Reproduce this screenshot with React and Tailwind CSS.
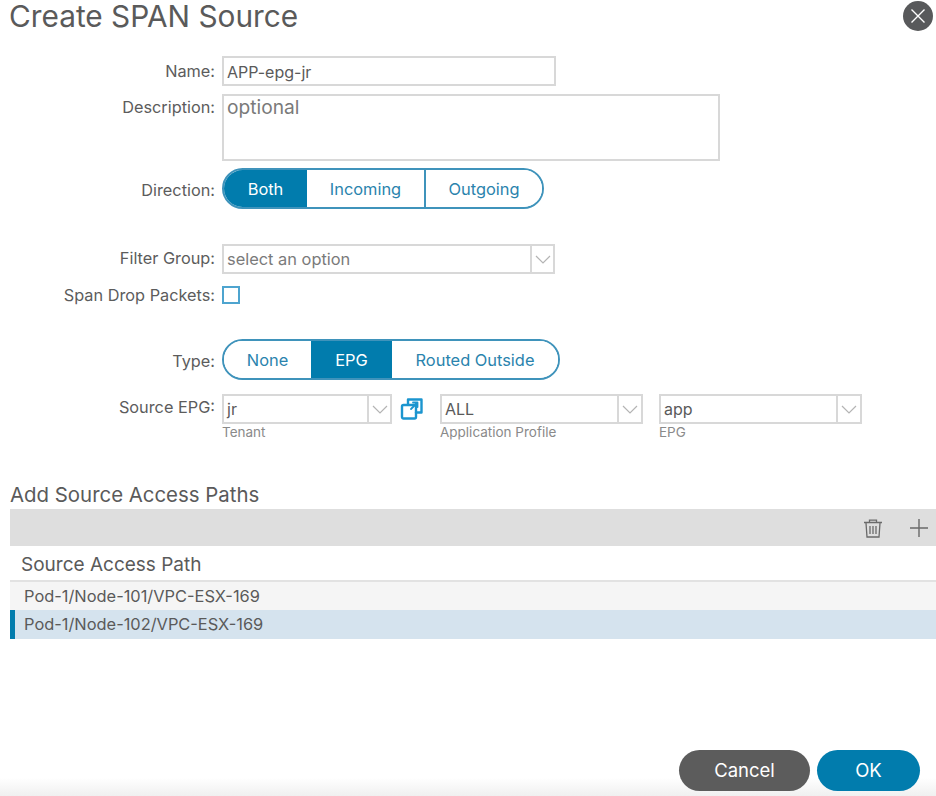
import React from "react";

const font = "[font-family:Inter,'Liberation_Sans',sans-serif]";

function Label({ children }) {
  return <div className="w-[215px] shrink-0 text-right text-[16.3px] leading-[20px] text-[#5c5c5c]">{children}</div>;
}

function Select({ value, placeholder, className, divider }) {
  return (
    <div className={`h-[30px] flex border-2 border-[#d8d8d8] bg-white ${className}`}>
      <div className={`flex-1 pl-[3px] leading-[27px] ${placeholder ? "text-[16.4px] text-[#7a7a7a]" : "text-[16px] text-[#5a5a5a]"}`}>{value}</div>
      <div className={`${divider} shrink-0 border-l-2 border-[#d8d8d8] flex items-center justify-center`}>
        <svg width="16" height="9" viewBox="0 0 16 9" fill="none" stroke="#b4b4b4" strokeWidth="1.2">
          <path d="M1 1l7 7 7-7" />
        </svg>
      </div>
    </div>
  );
}

function Segment({ items, widths }) {
  return (
    <div className="flex h-[41px] rounded-full border-2 border-[#3f93bb] overflow-hidden w-fit text-[16.4px]">
      {items.map((it, i) => (
        <div
          key={it.label}
          className={`${widths[i]} pt-[2px] flex items-center justify-center ${it.active ? "bg-[#017cad] text-white" : "bg-white text-[#2a83ad]"} ${it.divider ? "border-l-2 border-[#3f93bb]" : ""}`}
        >
          {it.label}
        </div>
      ))}
    </div>
  );
}

export default function App() {
  return (
    <div className={`${font} relative w-[936px] h-[796px] overflow-hidden bg-white flex flex-col`}>
      <div className="flex justify-between items-start pl-[9px] pr-[3px]">
        <h1 className="text-[29.8px] leading-[32px] text-[#5a5a5a] font-normal">Create SPAN Source</h1>
        <button className="mt-[1px] w-[30px] h-[30px] rounded-full bg-[#58595b] flex items-center justify-center">
          <svg width="16" height="16" viewBox="0 0 16 16" fill="none" stroke="#fff" strokeWidth="1.4">
            <path d="M1.5 1.5l13 13M14.5 1.5l-13 13" />
          </svg>
        </button>
      </div>

      <div className="flex items-center gap-[7px] mt-[24px]">
        <Label>Name:</Label>
        <div className="w-[334px] h-[30px] border-2 border-[#d8d8d8] pl-[3px] text-[16px] leading-[28px] text-[#5a5a5a]">APP-epg-jr</div>
      </div>

      <div className="flex items-start gap-[7px] mt-[8px]">
        <div className="pt-[3px]"><Label>Description:</Label></div>
        <div className="w-[498px] h-[67px] border-2 border-[#d8d8d8] pl-[3px] text-[19.2px] leading-[22px] text-[#7a7a7a]">optional</div>
      </div>

      <div className="flex items-center gap-[7px] mt-[7px]">
        <div className="pt-[3px]"><Label>Direction:</Label></div>
        <Segment
          items={[{ label: "Both", active: true }, { label: "Incoming" }, { label: "Outgoing", divider: true }]}
          widths={["w-[83px]", "w-[117px]", "w-[118px]"]}
        />
      </div>

      <div className="flex items-center gap-[7px] mt-[35px]">
        <div className="pb-[2px]"><Label>Filter Group:</Label></div>
        <Select value="select an option" placeholder className="w-[333px]" divider="w-[23px]" />
      </div>

      <div className="flex items-center gap-[7px] mt-[11px]">
        <Label>Span Drop Packets:</Label>
        <div className="w-[18px] h-[18px] border-2 border-[#4ea4cf] bg-white" />
      </div>

      <div className="flex items-center gap-[7px] mt-[34px]">
        <div className="pt-[2px]"><Label>Type:</Label></div>
        <Segment
          items={[{ label: "None" }, { label: "EPG", active: true }, { label: "Routed Outside" }]}
          widths={["w-[87px]", "w-[81px]", "w-[166px]"]}
        />
      </div>

      <div className="flex items-start gap-[7px] mt-[14px]">
        <div className="pt-[3px]"><Label>Source EPG:</Label></div>
        <div className="flex items-start">
          <div className="w-[170px]">
            <Select value="jr" className="w-[170px]" divider="w-[23px]" />
            <div className="text-[13.5px] leading-[16px] text-[#8a8a8a]">Tenant</div>
          </div>
          <svg className="ml-[8px] mt-[3px]" width="24" height="24" viewBox="0 0 24 24" fill="none" stroke="#1b95cf" strokeWidth="2.4" strokeLinejoin="round" strokeLinecap="round">
            <path d="M8 7V2.5h13.5v13H16" />
            <rect x="2" y="8" width="14" height="13.5" rx="1.5" />
            <path d="M11 12l6.5-6.5M13 5.5h4.5V10" strokeWidth="1.8" />
          </svg>
          <div className="w-[203px] ml-[16px]">
            <Select value="ALL" className="w-[203px]" divider="w-[24px]" />
            <div className="text-[13.5px] leading-[16px] text-[#8a8a8a]">Application Profile</div>
          </div>
          <div className="w-[203px] ml-[16px]">
            <Select value="app" className="w-[203px]" divider="w-[24px]" />
            <div className="text-[13.5px] leading-[16px] text-[#8a8a8a]">EPG</div>
          </div>
        </div>
      </div>

      <div className="ml-[10px] mt-[43px]">
        <div className="text-[20.4px] leading-[24px] text-[#5a5a5a]">Add Source Access Paths</div>
        <div className="h-[37px] mt-[2px] bg-[#dedede] flex items-center justify-end pr-[8px] gap-[26px]">
          <svg width="22" height="22" viewBox="0 0 22 22" fill="none" stroke="#6a6a6a" strokeWidth="1.3">
            <path d="M2 5.5h18M7.5 5V3.2h7V5M4 6l1 14h12l1-14M8 9v8M11 9v8M14 9v8" />
          </svg>
          <svg width="18" height="18" viewBox="0 0 18 18" fill="none" stroke="#6a6a6a" strokeWidth="1.4">
            <path d="M9 0v18M0 9h18" />
          </svg>
        </div>
        <div className="h-[35px] pl-[11px] border-b-2 border-[#e2e2e2] mt-[1px] text-[19px] leading-[35px] text-[#5a5a5a]">Source Access Path</div>
        <div className="h-[28px] pl-[14px] bg-[#f5f5f5] text-[16.4px] leading-[28px] text-[#5a5a5a]">Pod-1/Node-101/VPC-ESX-169</div>
        <div className="h-[29px] pl-[9px] bg-[#d5e3ee] border-l-[5px] border-[#017cad] text-[16.4px] leading-[28px] text-[#5a5a5a]">Pod-1/Node-102/VPC-ESX-169</div>
      </div>

      <div className="mt-auto h-[46px] pr-[16px] pb-[5px] flex justify-end items-end gap-[7px] bg-gradient-to-b from-white from-60% to-[#f0f0f0]">
        <button className="w-[131px] h-[41px] rounded-full bg-[#5c5c5c] text-white text-[18.5px]">Cancel</button>
        <button className="w-[103px] h-[41px] rounded-full bg-[#017cad] text-white text-[18.5px]">OK</button>
      </div>
    </div>
  );
}
